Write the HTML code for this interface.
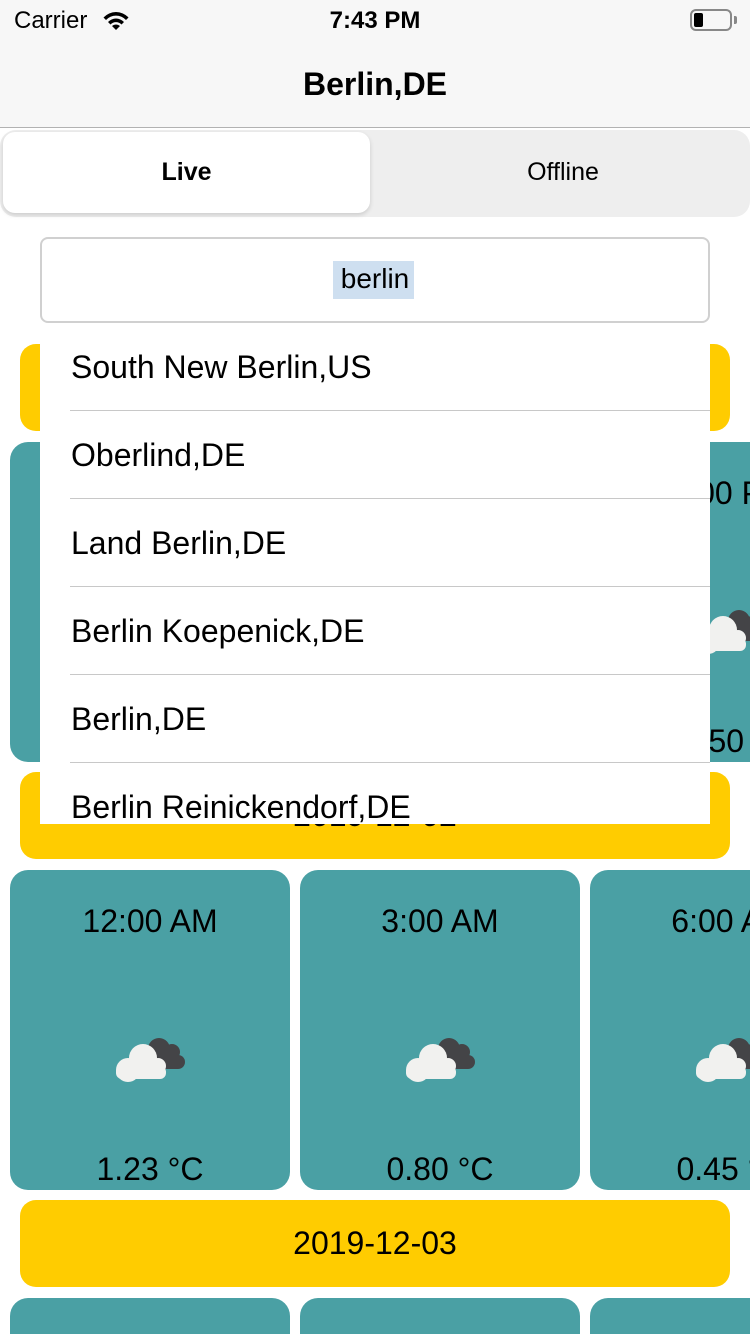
<!DOCTYPE html>
<html><head><meta charset="utf-8"><style>
*{margin:0;padding:0;box-sizing:border-box}
html,body{width:750px;height:1334px;overflow:hidden}
body{background:#fff;font-family:"Liberation Sans",sans-serif;position:relative;color:#000}
#wrap{position:absolute;left:0;top:0;width:750px;height:1334px;overflow:hidden}
.abs{position:absolute}
.yb{position:absolute;left:20px;width:710px;height:87px;background:#ffcc00;border-radius:16px;font-size:32px;display:flex;align-items:center;justify-content:center}
.card{position:absolute;width:280px;height:320px;background:#4aa0a4;border-radius:18px;overflow:hidden}
.card .t{position:absolute;top:33px;left:0;right:0;text-align:center;font-size:32px;white-space:nowrap}
.card .b{position:absolute;top:281px;left:0;right:0;text-align:center;font-size:32px;white-space:nowrap}
.card svg{position:absolute;left:104px;top:166px}
.row{position:absolute;width:640px;height:88px;border-bottom:1px solid #c8c8c8;font-size:32px;line-height:88px;padding-left:1px;white-space:nowrap}
</style></head><body><div id="wrap">
<div class="abs" style="left:0;top:0;width:750px;height:128px;background:#f7f7f7;border-bottom:1px solid #b2b2b2"></div>
<div class="abs" style="left:14px;top:7px;font-size:24px">Carrier</div>
<svg class="abs" style="left:101px;top:9px" width="30" height="22" viewBox="0 0 30 22"><path d="M15 21l-4-4a6 6 0 0 1 8 0z M7 13a11 11 0 0 1 16 0l-2.5 2.5a7.5 7.5 0 0 0-11 0z M2.5 8.5a17 17 0 0 1 25 0L25 11a13.5 13.5 0 0 0-20 0z" fill="#000"/></svg>
<div class="abs" style="left:0;width:750px;top:7px;text-align:center;font-size:24px;font-weight:bold">7:43 PM</div>
<div class="abs" style="left:690px;top:9px;width:42px;height:22px;border:2px solid #888;border-radius:6px"></div>
<div class="abs" style="left:694px;top:13px;width:9px;height:14px;background:#000;border-radius:2px"></div>
<div class="abs" style="left:734px;top:16px;width:3px;height:8px;background:#888;border-radius:0 2px 2px 0"></div>
<div class="abs" style="left:0;width:750px;top:66px;text-align:center;font-size:32px;font-weight:bold">Berlin,DE</div>
<div class="abs" style="left:0;top:130px;width:750px;height:87px;background:#eeeeee;border-radius:16px"></div>
<div class="abs" style="left:3px;top:132px;width:367px;height:81px;background:#fff;border-radius:12px;box-shadow:0 2px 5px rgba(0,0,0,.15);text-align:center;line-height:81px;font-size:25px;font-weight:bold">Live</div>
<div class="abs" style="left:376px;top:132px;width:374px;height:81px;text-align:center;line-height:81px;font-size:25px">Offline</div>
<div class="abs" style="left:40px;top:237px;width:670px;height:86px;border:2px solid #d0d0d0;border-radius:8px"></div>
<div class="abs" style="left:333px;top:261px;width:81px;height:38px;background:#cedff0"></div>
<div class="abs" style="left:0;width:750px;top:263px;text-align:center;font-size:28px">berlin</div>

<div class="yb" style="top:344px"></div>
<div class="card" style="left:10px;top:442px"></div>
<div class="card" style="left:300px;top:442px"></div>
<div class="card" style="left:590px;top:442px"><div class="t">9:00 PM</div><svg width="72" height="48" viewBox="0 0 72 48"><g fill="#444447"><circle cx="45" cy="13" r="11"/><circle cx="58" cy="16" r="8"/><circle cx="64" cy="26" r="7"/><rect x="42" y="18" width="22" height="15"/></g><g fill="#f1f1ef"><circle cx="29" cy="22" r="14"/><circle cx="14" cy="34" r="12"/><circle cx="44" cy="30" r="8"/><rect x="2" y="30" width="50" height="13" rx="6"/></g></svg><div class="b">-0.50 °C</div></div>
<div class="yb" style="top:772px">2019-12-02</div>
<div class="card" style="left:10px;top:870px"><div class="t">12:00 AM</div><svg width="72" height="48" viewBox="0 0 72 48"><g fill="#444447"><circle cx="45" cy="13" r="11"/><circle cx="58" cy="16" r="8"/><circle cx="64" cy="26" r="7"/><rect x="42" y="18" width="22" height="15"/></g><g fill="#f1f1ef"><circle cx="29" cy="22" r="14"/><circle cx="14" cy="34" r="12"/><circle cx="44" cy="30" r="8"/><rect x="2" y="30" width="50" height="13" rx="6"/></g></svg><div class="b">1.23 °C</div></div>
<div class="card" style="left:300px;top:870px"><div class="t">3:00 AM</div><svg width="72" height="48" viewBox="0 0 72 48"><g fill="#444447"><circle cx="45" cy="13" r="11"/><circle cx="58" cy="16" r="8"/><circle cx="64" cy="26" r="7"/><rect x="42" y="18" width="22" height="15"/></g><g fill="#f1f1ef"><circle cx="29" cy="22" r="14"/><circle cx="14" cy="34" r="12"/><circle cx="44" cy="30" r="8"/><rect x="2" y="30" width="50" height="13" rx="6"/></g></svg><div class="b">0.80 °C</div></div>
<div class="card" style="left:590px;top:870px"><div class="t">6:00 AM</div><svg width="72" height="48" viewBox="0 0 72 48"><g fill="#444447"><circle cx="45" cy="13" r="11"/><circle cx="58" cy="16" r="8"/><circle cx="64" cy="26" r="7"/><rect x="42" y="18" width="22" height="15"/></g><g fill="#f1f1ef"><circle cx="29" cy="22" r="14"/><circle cx="14" cy="34" r="12"/><circle cx="44" cy="30" r="8"/><rect x="2" y="30" width="50" height="13" rx="6"/></g></svg><div class="b">0.45 °C</div></div>
<div class="yb" style="top:1200px">2019-12-03</div>
<div class="card" style="left:10px;top:1298px"></div>
<div class="card" style="left:300px;top:1298px"></div>
<div class="card" style="left:590px;top:1298px"></div>

<div class="abs" style="left:40px;top:323px;width:670px;height:501px;background:#fff;overflow:hidden">
<div class="row" style="left:30px;top:0">South New Berlin,US</div>
<div class="row" style="left:30px;top:88px">Oberlind,DE</div>
<div class="row" style="left:30px;top:176px">Land Berlin,DE</div>
<div class="row" style="left:30px;top:264px">Berlin Koepenick,DE</div>
<div class="row" style="left:30px;top:352px">Berlin,DE</div>
<div class="row" style="left:30px;top:440px;border:none">Berlin Reinickendorf,DE</div>
</div>
</div></body></html>
